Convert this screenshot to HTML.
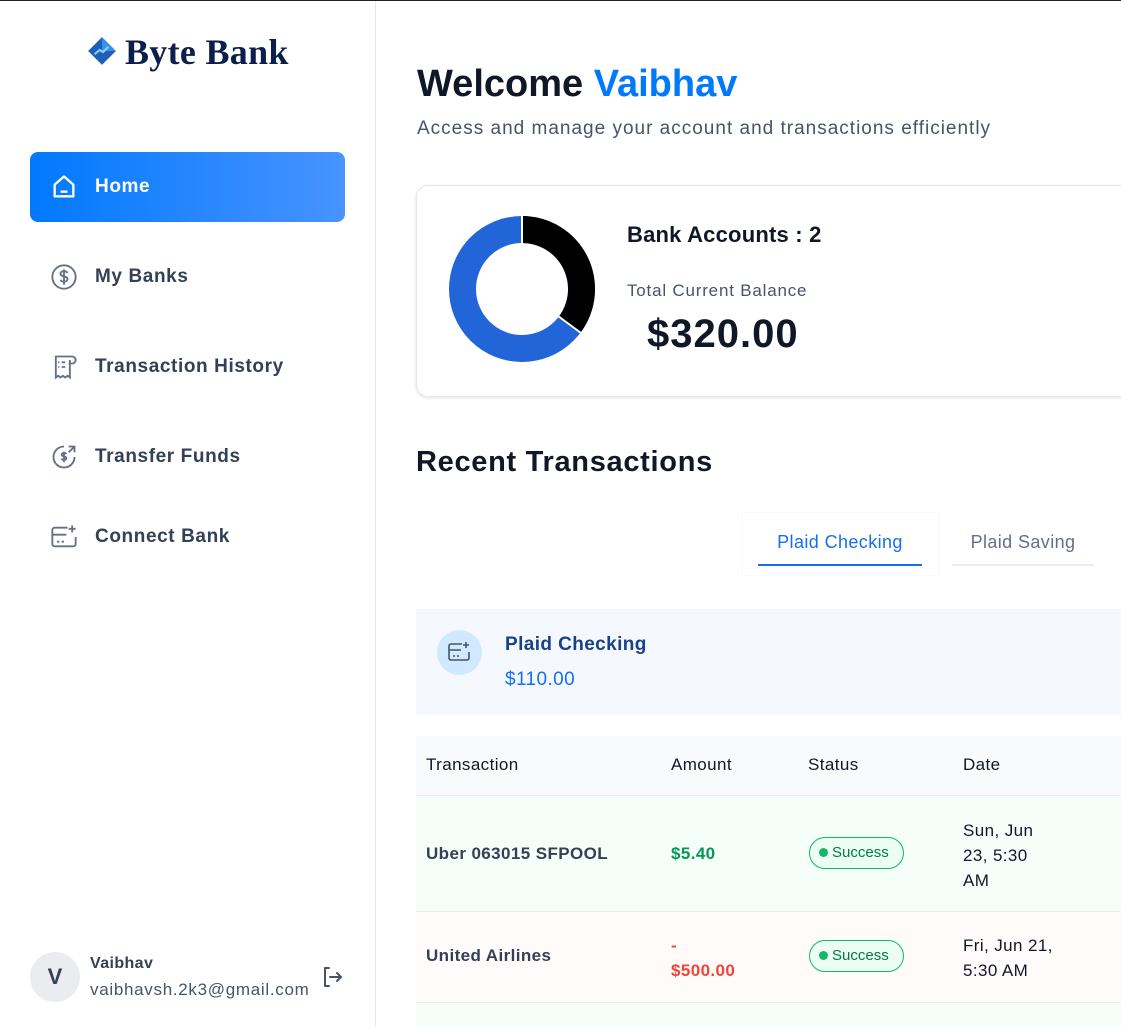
<!DOCTYPE html>
<html><head><meta charset="utf-8"><style>
*{box-sizing:border-box;margin:0;padding:0}
body{width:1121px;height:1026px;overflow:hidden;background:#fff;font-family:"Liberation Sans",sans-serif;position:relative;border-top:1px solid #222}
.sb{position:absolute;left:0;top:0;width:376px;height:1026px;border-right:1px solid #e5e7eb}
.logo{position:absolute;left:86px;top:30px;font-family:"Liberation Serif",serif;font-weight:bold;font-size:36px;color:#0b1f4d;letter-spacing:.3px}
.nav{position:absolute;left:30px;width:315px;height:70px;display:flex;align-items:center;padding-left:20px;font-size:19px;font-weight:bold;color:#344054;letter-spacing:.6px}
.nav svg{margin-right:17px}
.active{background:linear-gradient(90deg,#0179fe,#4893ff);color:#fff;border-radius:8px}
.abs{position:absolute}
.t{letter-spacing:.4px}
</style></head><body>
<div class="sb">
 <div class="logo"><svg width="32" height="32" viewBox="0 0 30 30" style="vertical-align:-3px;margin-right:7px"><path d="M15 2L28 15L15 28L2 15Z" fill="#1f5fb8"/><path d="M15 2L28 15L15 15Z" fill="#3b8ee8"/><path d="M8 18l5-4 3 2 5-5" stroke="#7fd0ff" stroke-width="2" fill="none"/></svg>Byte Bank</div>
 <div class="nav active" style="top:151px"><svg width="28" height="28" viewBox="0 0 24 24" fill="none" stroke="#fff" stroke-width="2" stroke-linejoin="round"><path d="M4 10L12 3L20 10V20H4Z"/><path d="M9 16h6"/></svg>Home</div>
 <div class="nav" style="top:241px"><svg width="28" height="28" viewBox="0 0 24 24" fill="none" stroke="#667085" stroke-width="1.6"><circle cx="12" cy="12" r="10"/><path d="M15 8.5c-.5-1-1.6-1.5-3-1.5-1.7 0-3 .9-3 2.2 0 3 6 1.5 6 4.6 0 1.3-1.3 2.2-3 2.2-1.4 0-2.6-.6-3-1.6M12 5.5v13"/></svg>My Banks</div>
 <div class="nav" style="top:331px"><svg width="28" height="28" viewBox="0 0 24 24" fill="none" stroke="#667085" stroke-width="1.6"><path d="M17 6V21l-2-1.5-2 1.5-2-1.5-2 1.5-2-1.5-2 1.5V3h14a3 3 0 0 1 0 6h-3"/><path d="M7 8h1M10 8h3M7 12h1M10 12h3"/></svg>Transaction History</div>
 <div class="nav" style="top:421px"><svg width="28" height="28" viewBox="0 0 24 24" fill="none" stroke="#667085" stroke-width="1.6"><path d="M21 12a9 9 0 1 1-9-9"/><path d="M16 3h5v5M21 3l-5 5"/><path d="M14 9.5c-.4-.7-1.2-1-2-1-1.2 0-2 .6-2 1.5 0 2 4 1 4 3 0 .9-.9 1.5-2 1.5-1 0-1.8-.4-2.1-1.1M12 7.5v9"/></svg>Transfer Funds</div>
 <div class="nav" style="top:501px"><svg width="28" height="28" viewBox="0 0 24 24" fill="none" stroke="#667085" stroke-width="1.6"><path d="M15 4H4a2 2 0 0 0-2 2v12a2 2 0 0 0 2 2h16a2 2 0 0 0 2-2v-6"/><path d="M2 10h12M19 2v6M16 5h6M6 16h2M10 16h2"/></svg>Connect Bank</div>
 <div class="abs" style="left:30px;top:951px;width:50px;height:50px;border-radius:50%;background:#eaecf0;color:#344054;font-weight:bold;font-size:22px;text-align:center;line-height:50px">V</div>
 <div class="abs" style="left:90px;top:954px;font-size:16px;font-weight:bold;color:#344054;letter-spacing:.4px">Vaibhav</div>
 <div class="abs" style="left:90px;top:979px;font-size:17px;color:#475467;letter-spacing:.7px">vaibhavsh.2k3@gmail.com</div>
 <svg class="abs" style="left:320px;top:964px" width="24" height="24" viewBox="0 0 24 24" fill="none" stroke="#475467" stroke-width="2" stroke-linecap="round" stroke-linejoin="round"><path d="M9 3H5v18h4"/><path d="M10 12h11M17 8l4 4-4 4"/></svg>
</div>

<div class="abs" style="left:417px;top:62px;font-size:38px;font-weight:bold;color:#101828">Welcome <span style="color:#0179fe">Vaibhav</span></div>
<div class="abs" style="left:417px;top:117px;font-size:19px;color:#475467;letter-spacing:1px">Access and manage your account and transactions efficiently</div>

<div class="abs" style="left:416px;top:184px;width:720px;height:212px;border:1px solid #e4e7ec;border-radius:12px;box-shadow:0 1px 3px rgba(0,0,0,.12)"></div>
<svg class="abs" style="left:447px;top:213px" width="150" height="150" viewBox="0 0 150 150">
 <circle cx="75" cy="75" r="59.5" fill="none" stroke="#2265d8" stroke-width="27"/>
 <path d="M75 2A73 73 0 0 1 133.5 118.7L111.9 102.6A46 46 0 0 0 75 29Z" fill="#000"/>
 <line x1="75" y1="0" x2="75" y2="30" stroke="#fff" stroke-width="2"/>
 <line x1="134" y1="119" x2="111" y2="102" stroke="#fff" stroke-width="2"/>
</svg>
<div class="abs" style="left:627px;top:221px;font-size:22px;font-weight:bold;color:#101828;letter-spacing:.2px">Bank Accounts : 2</div>
<div class="abs" style="left:627px;top:280px;font-size:17px;color:#475467;letter-spacing:.8px">Total Current Balance</div>
<div class="abs" style="left:647px;top:311px;font-size:40px;font-weight:bold;color:#101828;letter-spacing:1px">$320.00</div>

<div class="abs" style="left:416px;top:445px;font-size:29px;font-weight:bold;color:#101828;letter-spacing:.7px">Recent Transactions</div>
<div class="abs" style="left:743px;top:512px;width:195px;height:62px;box-shadow:0 0 2px rgba(0,0,0,.08)"></div>
<div class="abs t" style="left:758px;top:531px;width:164px;text-align:center;font-size:18px;color:#1570ef">Plaid Checking</div>
<div class="abs" style="left:758px;top:563px;width:164px;height:2px;background:#1570ef"></div>
<div class="abs t" style="left:952px;top:531px;width:142px;text-align:center;font-size:18px;color:#667085">Plaid Saving</div>
<div class="abs" style="left:952px;top:563px;width:142px;height:2px;background:#eaecf0"></div>

<div class="abs" style="left:416px;top:608px;width:705px;height:106px;background:#f5f9ff"></div>
<div class="abs" style="left:437px;top:629px;width:45px;height:45px;border-radius:50%;background:#d1e9ff"></div>
<svg class="abs" style="left:447px;top:639px" width="24" height="24" viewBox="0 0 24 24" fill="none" stroke="#475467" stroke-width="1.6"><path d="M15 4H4a2 2 0 0 0-2 2v12a2 2 0 0 0 2 2h16a2 2 0 0 0 2-2v-6"/><path d="M2 10h12M19 2v6M16 5h6M6 16h2M10 16h2"/></svg>
<div class="abs t" style="left:505px;top:633px;font-size:19px;font-weight:bold;color:#194185">Plaid Checking</div>
<div class="abs t" style="left:505px;top:668px;font-size:19px;color:#1570ef">$110.00</div>

<div class="abs" style="left:416px;top:735px;width:705px;height:60px;background:#f9fafb;border-bottom:1px solid #eaecf0"></div>
<div class="abs" style="left:416px;top:795px;width:705px;height:116px;background:#f6fef9;border-bottom:1px solid #eaecf0"></div>
<div class="abs" style="left:416px;top:911px;width:705px;height:91px;background:#fffbfa;border-bottom:1px solid #eaecf0"></div>
<div class="abs" style="left:416px;top:1002px;width:705px;height:24px;background:#f6fef9"></div>
<div class="abs t" style="top:754px;left:426px;font-size:17px;color:#101828">Transaction</div>
<div class="abs t" style="top:754px;left:671px;font-size:17px;color:#101828">Amount</div>
<div class="abs t" style="top:754px;left:808px;font-size:17px;color:#101828">Status</div>
<div class="abs t" style="top:754px;left:963px;font-size:17px;color:#101828">Date</div>

<div class="abs t" style="top:843px;left:426px;font-size:17px;font-weight:bold;color:#344054">Uber 063015 SFPOOL</div>
<div class="abs t" style="top:843px;left:671px;font-size:17px;font-weight:bold;color:#039855">$5.40</div>
<div class="abs" style="top:836px;left:809px;width:95px;height:32px;border:1px solid #12b76a;border-radius:16px;background:#ecfdf3;font-size:15px;color:#027a48;line-height:30px;padding-left:9px"><span style="display:inline-block;width:9px;height:9px;border-radius:50%;background:#12b76a;margin-right:4px"></span>Success</div>
<div class="abs t" style="top:817px;left:963px;font-size:17px;line-height:25px;color:#101828">Sun, Jun<br>23, 5:30<br>AM</div>

<div class="abs t" style="top:945px;left:426px;font-size:17px;font-weight:bold;color:#344054">United Airlines</div>
<div class="abs t" style="top:932px;left:671px;font-size:17px;font-weight:bold;color:#f04438;line-height:25px">-<br>$500.00</div>
<div class="abs" style="top:939px;left:809px;width:95px;height:32px;border:1px solid #12b76a;border-radius:16px;background:#ecfdf3;font-size:15px;color:#027a48;line-height:30px;padding-left:9px"><span style="display:inline-block;width:9px;height:9px;border-radius:50%;background:#12b76a;margin-right:4px"></span>Success</div>
<div class="abs t" style="top:932px;left:963px;font-size:17px;line-height:25px;color:#101828">Fri, Jun 21,<br>5:30 AM</div>
</body></html>
